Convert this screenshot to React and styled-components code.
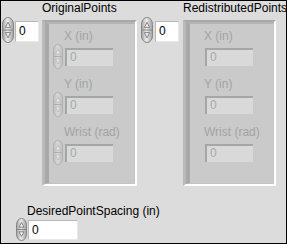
import React from 'react';
import styled, { createGlobalStyle } from 'styled-components';

const Global = createGlobalStyle`
  html, body { margin: 0; padding: 0; background: #dcdcdc; }
  body { font-family: "Liberation Sans", Arial, sans-serif; }
`;

const Panel = styled.div`
  width: 287px;
  height: 244px;
  box-sizing: border-box;
  border: 1px solid #000;
  background: #dcdcdc;
  padding: 0 0 0 1px;
  display: flex;
  flex-direction: column;
`;

const TopRow = styled.div`
  display: flex;
  gap: 4px;
`;

const ArrayWrap = styled.div`
  display: grid;
  grid-template-columns: ${p => p.indexWidth}px ${p => p.frameWidth}px;
  grid-template-rows: 16px auto;
`;

const Label = styled.div`
  font-size: 12px;
  line-height: 14px;
  color: ${p => (p.disabled ? '#a3a3a3' : '#000')};
  white-space: nowrap;
`;

const ArrayLabel = styled(Label)`
  grid-column: 2;
  grid-row: 1;
`;

const IndexCell = styled.div`
  grid-column: 1;
  grid-row: 2;
  display: flex;
  align-items: flex-start;
  gap: ${p => p.gap}px;
`;

const Frame = styled.div`
  grid-column: 2;
  grid-row: 2;
  margin-top: 3px;
  height: 166px;
  box-sizing: border-box;
  border-top: 2px solid #a9a9a9;
  border-left: 3px solid #b9b9b9;
  border-right: 2px solid #ffffff;
  border-bottom: 2px solid #ffffff;
  background: #cacaca;
  display: flex;
`;

const Cluster = styled.div`
  flex: 1;
  box-sizing: border-box;
  border-top: 2px solid #b4b4b4;
  border-left: 4px solid #a8a8a8;
  border-right: 1px solid #c4c4c4;
  border-bottom: 1px solid #c4c4c4;
  padding: 5px 0 0 ${p => p.pad}px;
  display: flex;
  flex-direction: column;
`;

const Field = styled.div`
  display: grid;
  grid-template-columns: ${p => p.spinW}px 48px;
  grid-template-rows: 14px 18px;
  row-gap: 5px;
  margin-bottom: 11px;
`;

const FieldLabel = styled(Label)`
  grid-column: 2;
  grid-row: 1;
  margin-left: -1px;
`;

const SpinCell = styled.div`
  grid-column: 1;
  grid-row: 2;
  margin-top: ${p => p.top}px;
`;

const DimBox = styled.div`
  grid-column: 2;
  grid-row: 2;
  box-sizing: border-box;
  background: #d9d9d9;
  border-top: 2px solid #a6a6a6;
  border-left: 2px solid #a6a6a6;
  font-size: 12px;
  line-height: 15px;
  color: #a8a8a8;
  padding-left: 3px;
`;

const ValueBox = styled.div`
  grid-column: ${p => p.col || 'auto'};
  grid-row: ${p => p.row || 'auto'};
  box-sizing: border-box;
  width: ${p => p.w}px;
  height: ${p => p.h}px;
  margin-top: ${p => p.top || 0}px;
  background: #ffffff;
  border-top: 1px solid #b8b8b8;
  border-left: 1px solid #b8b8b8;
  border-right: 1px solid #e8e8e8;
  border-bottom: 1px solid #e8e8e8;
  font-size: 12px;
  line-height: ${p => p.h - 2}px;
  color: #000;
  padding-left: 3px;
`;

const BottomBlock = styled.div`
  margin-top: 18px;
  display: grid;
  grid-template-columns: 12px 50px;
  grid-template-rows: 14px auto;
  padding-left: 14px;
`;

const BottomLabel = styled(Label)`
  grid-column: 2;
  grid-row: 1;
  margin-left: -1px;
`;

function Spinner({ w = 12, h = 24, dim }) {
  const fillTop = dim ? '#d8d8d8' : '#ececec';
  const fillBot = dim ? '#bdbdbd' : '#a0a0a0';
  const edge = dim ? '#b0b0b0' : '#858585';
  const arrow = dim ? '#b8b8b8' : '#6a6a6a';
  const id = dim ? 'gd' : 'gn';
  return (
    <svg width={w} height={h} viewBox={`0 0 ${w} ${h}`} style={{ display: 'block' }}>
      <defs>
        <linearGradient id={id} x1="0" y1="0" x2="1" y2="0">
          <stop offset="0" stopColor={fillBot} />
          <stop offset="0.45" stopColor={fillTop} />
          <stop offset="1" stopColor={fillBot} />
        </linearGradient>
      </defs>
      <rect x="0.5" y="0.5" width={w - 1} height={h - 1} rx={(w - 1) / 2} ry={(w - 1) / 1.6} fill={`url(#${id})`} stroke={edge} />
      <line x1="1" y1={h / 2} x2={w - 1} y2={h / 2} stroke={edge} />
      <path d={`M${w / 2} ${h * 0.2} L${w / 2 + 2.5} ${h * 0.4} L${w / 2 - 2.5} ${h * 0.4} Z`} fill={dim ? '#e6e6e6' : '#f4f4f4'} stroke={arrow} strokeWidth="0.8" />
      <path d={`M${w / 2} ${h * 0.8} L${w / 2 + 2.5} ${h * 0.6} L${w / 2 - 2.5} ${h * 0.6} Z`} fill={dim ? '#e6e6e6' : '#f4f4f4'} stroke={arrow} strokeWidth="0.8" />
    </svg>
  );
}

const fields = ['X (in)', 'Y (in)', 'Wrist (rad)'];

function ArrayControl({ name, indexWidth, indexGap, frameWidth, innerSpin }) {
  return (
    <ArrayWrap indexWidth={indexWidth} frameWidth={frameWidth}>
      <ArrayLabel>{name}</ArrayLabel>
      <IndexCell gap={indexGap}>
        <Spinner w={12} h={26} />
        <ValueBox w={24} h={21} top={4}>0</ValueBox>
      </IndexCell>
      <Frame>
        <Cluster pad={innerSpin ? 4 : 15}>
          {fields.map(f => (
            <Field key={f} spinW={innerSpin ? 12 : 0}>
              <FieldLabel disabled>{f}</FieldLabel>
              {innerSpin && (
                <SpinCell top={-4}>
                  <Spinner w={10} h={25} dim />
                </SpinCell>
              )}
              <DimBox>0</DimBox>
            </Field>
          ))}
        </Cluster>
      </Frame>
    </ArrayWrap>
  );
}

export default function App() {
  return (
    <>
      <Global />
      <Panel>
        <TopRow>
          <ArrayControl name="OriginalPoints" indexWidth={40} indexGap={1} frameWidth={95} innerSpin />
          <ArrayControl name="RedistributedPoints" indexWidth={42} indexGap={2} frameWidth={93} />
        </TopRow>
        <BottomBlock>
          <BottomLabel>DesiredPointSpacing (in)</BottomLabel>
          <SpinCell top={0}>
            <Spinner w={11} h={23} />
          </SpinCell>
          <ValueBox col={2} row={2} w={50} h={20} top={2}>0</ValueBox>
        </BottomBlock>
      </Panel>
    </>
  );
}
